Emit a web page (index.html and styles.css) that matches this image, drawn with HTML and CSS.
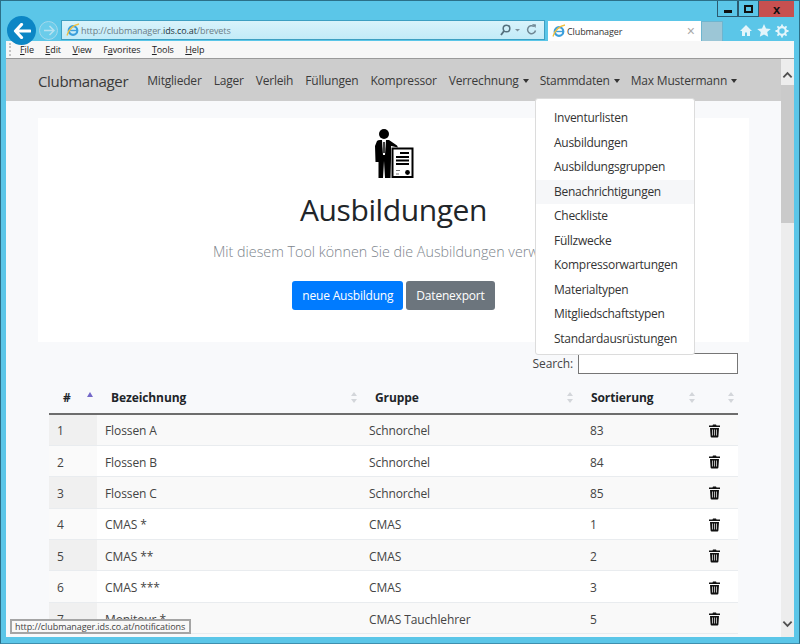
FILE: index.html
```html
<!DOCTYPE html>
<html>
  <head>
    <meta charset="utf-8">
    <title>Clubmanager</title>
    <link rel="stylesheet" href="styles.css">
  </head>
  <body>
    <div class="window">
      <div class="caption">
        <div class="caption-btn"><span class="min-glyph"></span></div>
        <div class="caption-btn"><span class="max-glyph"></span></div>
        <div class="caption-btn close-btn"><span class="close-glyph">x</span></div>
      </div>

      <div class="toolbar">
        <div class="back-btn">
          <svg width="18" height="16" viewBox="0 0 18 16"><path d="M8.500 1.500 2.500 8l6 6.500M3 8H17" fill="none" stroke="#fff" stroke-width="3.200" stroke-linecap="round" stroke-linejoin="round"/></svg>
        </div>
        <div class="fwd-btn">
          <svg width="12" height="11" viewBox="0 0 12 11"><path d="M6.500 1 11 5.500 6.500 10M11 5.500H1" fill="none" stroke="#b7e2f1" stroke-width="1.500"/></svg>
        </div>
        <div class="address">
          <svg class="ie-logo" width="14" height="14" viewBox="0 0 14 14"><circle cx="7" cy="7.500" r="4.300" fill="none" stroke="#3c9fdc" stroke-width="2.200"/><path d="M3 7.500h8" stroke="#3c9fdc" stroke-width="1.400"/><path d="M1 12.500C3 6 8 2 13 1" fill="none" stroke="#f0c040" stroke-width="1.300"/></svg>
          <span class="url">http://clubmanager.<b>ids.co.at</b>/brevets</span>
          <svg class="addr-icons" width="40" height="14" viewBox="0 0 40 14"><circle cx="6.500" cy="5.500" r="3.300" fill="none" stroke="#55707e" stroke-width="1.500"/><path d="M4 8 1 12" stroke="#55707e" stroke-width="1.800"/><path d="m15 6 2.500 2.500L20 6z" fill="#7d929d"/><path d="M34 3.500a4 4 0 1 0 1.500 4" fill="none" stroke="#6f8794" stroke-width="1.500"/><path d="m32 1 4 .500-.500 3.500z" fill="#6f8794"/></svg>
        </div>
        <div class="tab">
          <svg class="ie-logo" width="14" height="14" viewBox="0 0 14 14"><circle cx="7" cy="7.500" r="4.300" fill="none" stroke="#3c9fdc" stroke-width="2.200"/><path d="M3 7.500h8" stroke="#3c9fdc" stroke-width="1.400"/><path d="M1 12.500C3 6 8 2 13 1" fill="none" stroke="#f0c040" stroke-width="1.300"/></svg>
          <span class="tab-title">Clubmanager</span>
          <span class="tab-close">×</span>
        </div>
        <div class="new-tab"></div>
        <div class="tool-icons">
          <svg width="14" height="13" viewBox="0 0 14 13"><path d="M7 1 1 7h2v5h3V8.500h2V12h3V7h2z" fill="#e4f5fb"/></svg>
          <svg width="14" height="13" viewBox="0 0 14 13"><path d="m7 0 2 4.400 4.800.5-3.600 3.200 1 4.700L7 10.400 2.800 12.800l1-4.700L.2 4.900 5 4.400z" fill="#e4f5fb"/></svg>
          <svg width="14" height="14" viewBox="0 0 14 14"><circle cx="7" cy="7" r="3.800" fill="none" stroke="#e4f5fb" stroke-width="2.200"/><path d="M7 .5v2.500M7 11v2.500M.5 7H3M11 7h2.500M2.400 2.400l1.800 1.800M9.800 9.800l1.800 1.800M2.400 11.600l1.800-1.800M9.800 4.200l1.800-1.800" stroke="#e4f5fb" stroke-width="1.800"/></svg>
        </div>
      </div>

      <div class="viewport">
        <div class="menubar">
          <span class="grip"></span>
          <span class="menu-item"><u>F</u>ile</span>
          <span class="menu-item"><u>E</u>dit</span>
          <span class="menu-item"><u>V</u>iew</span>
          <span class="menu-item">F<u>a</u>vorites</span>
          <span class="menu-item"><u>T</u>ools</span>
          <span class="menu-item"><u>H</u>elp</span>
        </div>

        <div class="page-row">
          <div class="page">
            <nav class="navbar">
              <a class="brand">Clubmanager</a>
              <a class="nav-link">Mitglieder</a>
              <a class="nav-link">Lager</a>
              <a class="nav-link">Verleih</a>
              <a class="nav-link">Füllungen</a>
              <a class="nav-link">Kompressor</a>
              <a class="nav-link caret">Verrechnung</a>
              <a class="nav-link caret">Stammdaten</a>
              <a class="nav-link caret">Max Mustermann</a>
            </nav>

            <div class="dropdown">
              <a class="dropdown-item">Inventurlisten</a>
              <a class="dropdown-item">Ausbildungen</a>
              <a class="dropdown-item">Ausbildungsgruppen</a>
              <a class="dropdown-item hover">Benachrichtigungen</a>
              <a class="dropdown-item">Checkliste</a>
              <a class="dropdown-item">Füllzwecke</a>
              <a class="dropdown-item">Kompressorwartungen</a>
              <a class="dropdown-item">Materialtypen</a>
              <a class="dropdown-item">Mitgliedschaftstypen</a>
              <a class="dropdown-item">Standardausrüstungen</a>
            </div>

            <section class="jumbotron">
              <svg class="hero-icon" width="40" height="50" viewBox="0 0 40 50">
                <circle cx="10" cy="5" r="5" fill="#000"/>
                <path d="M3 12q1-1 3-1h9l8 5.500 1 2-7-1.500v13l-.500 19H11l-1-17-1 17H4.500V33h-3L1 17z" fill="#000"/>
                <path d="M8 11h4l-1 15H9z" fill="#fff"/>
                <path d="M10 13v11" stroke="#000" stroke-width="1.500"/>
                <rect x="18.500" y="19.500" width="20" height="28.500" fill="#fff" stroke="#000" stroke-width="2"/>
                <path d="M26 24h9M22 28h13M22 31.500h13M22 35h13" stroke="#000" stroke-width="1.800"/>
                <circle cx="33.500" cy="43.500" r="2.400" fill="#000"/>
                <path d="M22 41.500h4M22 45h3" stroke="#777" stroke-width="1"/>
              </svg>
              <h1 class="hero-title">Ausbildungen</h1>
              <p class="lead">Mit diesem Tool können Sie die Ausbildungen verwalten.</p>
              <div class="hero-buttons">
                <a class="btn btn-primary">neue Ausbildung</a>
                <a class="btn btn-secondary">Datenexport</a>
              </div>
            </section>

            <div class="table-wrap">
              <div class="search">
                <label>Search:</label>
                <input type="text">
              </div>
              <table class="data">
                <colgroup>
                  <col class="c-num"><col class="c-name"><col class="c-group"><col class="c-sort"><col class="c-del">
                </colgroup>
                <thead>
                  <tr>
                    <th class="num-head">#<span class="sort-up"></span></th>
                    <th>Bezeichnung<span class="sort-both"></span></th>
                    <th class="group-head">Gruppe<span class="sort-both"></span></th>
                    <th class="sort-head">Sortierung<span class="sort-both"></span></th>
                    <th><span class="sort-both"></span></th>
                  </tr>
                </thead>
                <tbody id="rows"></tbody>
              </table>
            </div>

            <div class="status-tip">http://clubmanager.ids.co.at/notifications</div>
          </div>

          <div class="scrollbar">
            <svg width="11" height="8" viewBox="0 0 12 8"><path d="M1.500 6.500 6 2l4.500 4.500" fill="none" stroke="#505050" stroke-width="2"/></svg>
            <div class="thumb"></div>
            <svg class="arrow-down" width="11" height="8" viewBox="0 0 12 8"><path d="M1.500 1.500 6 6l4.500-4.500" fill="none" stroke="#505050" stroke-width="2"/></svg>
          </div>
        </div>
      </div>
    </div>

    <script>
      var rows = [
        ["1", "Flossen A", "Schnorchel", "83"],
        ["2", "Flossen B", "Schnorchel", "84"],
        ["3", "Flossen C", "Schnorchel", "85"],
        ["4", "CMAS *", "CMAS", "1"],
        ["5", "CMAS **", "CMAS", "2"],
        ["6", "CMAS ***", "CMAS", "3"],
        ["7", "Monitour *", "CMAS Tauchlehrer", "5"],
      ];
      var trash = '<svg width="11" height="14" viewBox="0 0 11 13"><path d="M4 0h3l.5 1H11v1.500H0V1h3.500zM1 3.500h9l-.6 8.500q-.1 1-1 1H2.600q-.9 0-1-1z" fill="#111"/><path d="M3.500 5v6M5.500 5v6M7.500 5v6" stroke="#fff" stroke-width=".7"/></svg>';
      var body = document.querySelector("#rows");
      rows.forEach(function (r) {
        var tr = document.createElement("tr");
        tr.innerHTML =
          '<td class="num">' + r[0] + "</td><td>" + r[1] + "</td><td>" + r[2] + "</td><td>" + r[3] + '</td><td class="del">' + trash + "</td>";
        body.appendChild(tr);
      });
    </script>
  </body>
</html>
```

FILE: styles.css
```css
* {
  box-sizing: border-box;
}
html,
body {
  margin: 0;
  height: 100%;
  overflow: hidden;
}
body {
  font-family: "Open Sans", "Liberation Sans", sans-serif;
  color: #212529;
}
.window {
  width: 800px;
  height: 644px;
  display: flex;
  flex-direction: column;
  background-color: #5bc6e8;
  border: 1px solid #2b6f88;
  border-bottom-color: #3f8fae;
  padding: 0 5px 6px 5px;
}
.caption {
  display: flex;
  justify-content: flex-end;
  height: 16px;
}
.caption-btn {
  width: 21px;
  height: 16px;
  display: flex;
  align-items: center;
  justify-content: center;
  border: 1px solid #2b5a70;
  border-top: 0;
}
.close-btn {
  width: 35px;
  background-color: #c75050;
  border: 0;
}
.min-glyph {
  width: 8px;
  height: 3px;
  margin-top: 6px;
  background-color: #111;
}
.max-glyph {
  width: 9px;
  height: 8px;
  border: 2px solid #111;
}
.close-glyph {
  color: #111;
  font: bold 13px/13px "Liberation Sans", sans-serif;
}
.toolbar {
  display: flex;
  align-items: flex-end;
  height: 24px;
  position: relative;
}
.back-btn {
  width: 29px;
  height: 29px;
  border-radius: 50%;
  background-color: #0c86c5;
  display: flex;
  align-items: center;
  justify-content: center;
  margin: 0 0 -4px 1px;
  position: relative;
  z-index: 1;
  flex: none;
}
.fwd-btn {
  width: 19px;
  height: 19px;
  border-radius: 50%;
  border: 1.500px solid #a3d9ec;
  background-color: #6accea;
  display: flex;
  align-items: center;
  justify-content: center;
  margin: 0 0 1px 3px;
  flex: none;
}
.address {
  width: 484px;
  height: 20px;
  margin: 0 0 1px 3px;
  padding: 0 4px;
  background: linear-gradient(#d9f3fb, #c2ebf8);
  border: 1px solid #3d9fc2;
  display: flex;
  align-items: center;
  gap: 1px;
  flex: none;
}
.url {
  flex: 1;
  font-size: 9px;
  letter-spacing: -0.1px;
  color: #6b7d86;
}
.url b {
  font-weight: 400;
  color: #24343c;
}
.tab {
  width: 153px;
  height: 20px;
  margin-left: 3px;
  padding: 0 6px 0 4px;
  background-color: #fff;
  display: flex;
  align-items: center;
  gap: 1px;
  flex: none;
}
.tab-title {
  flex: 1;
  font-size: 9px;
  letter-spacing: -0.1px;
  color: #333;
}
.tab-close {
  font: 14px/14px "Liberation Sans", sans-serif;
  color: #aaa;
}
.new-tab {
  width: 22px;
  height: 20px;
  background-color: #9cc6d6;
  border: 1px solid #6db5cf;
  border-bottom: 0;
  flex: none;
}
.tool-icons {
  display: flex;
  gap: 4px;
  align-items: center;
  height: 21px;
  margin-left: 16px;
}
.viewport {
  flex: 1;
  min-height: 0;
  display: flex;
  flex-direction: column;
  background-color: #fff;
}
.menubar {
  height: 18px;
  flex: none;
  display: flex;
  align-items: center;
  background-color: #f7f7f7;
  border-bottom: 1px solid #9a9a9a;
  font-size: 9px;
  letter-spacing: -0.1px;
  color: #222;
  padding-left: 3px;
}
.grip {
  width: 2px;
  height: 13px;
  margin-right: 9px;
  border-left: 2px dotted #c4c4c4;
}
.menu-item {
  margin-right: 11.500px;
}
.page-row {
  flex: 1;
  min-height: 0;
  display: flex;
}
.page {
  flex: 1;
  min-width: 0;
  position: relative;
  overflow: hidden;
  background-color: #f8f9fb;
}
.navbar {
  height: 42px;
  display: flex;
  align-items: center;
  padding: 1px 0 0 32px;
  background-color: #cdcdcd;
  color: #3a3a3a;
  white-space: nowrap;
}
.brand {
  font-size: 15px;
  letter-spacing: -0.35px;
  margin-right: 19px;
}
.nav-link {
  font-size: 12px;
  letter-spacing: -0.2px;
  margin-right: 12px;
}
.caret {
  margin-right: 11px;
}
.caret::after {
  content: "";
  display: inline-block;
  margin-left: 4px;
  vertical-align: 2px;
  border-top: 4px solid #333;
  border-left: 3.500px solid transparent;
  border-right: 3.500px solid transparent;
}
.dropdown {
  position: absolute;
  left: 529px;
  top: 39px;
  z-index: 5;
  width: 160px;
  height: 257px;
  padding: 7px 0;
  background-color: #fff;
  border: 1px solid #dcdcdc;
  border-radius: 3px;
}
.dropdown-item {
  display: block;
  height: 24.500px;
  line-height: 24px;
  padding-left: 18px;
  font-size: 12px;
  letter-spacing: -0.27px;
  color: #333;
}
.dropdown-item.hover {
  background-color: #f6f7f9;
}
.jumbotron {
  margin: 17px 32px 0;
  height: 224px;
  padding-top: 11px;
  background-color: #fff;
  display: flex;
  flex-direction: column;
  align-items: center;
}
.hero-icon {
  display: block;
}
.hero-title {
  margin: 10px 0 0;
  font-size: 30px;
  letter-spacing: -0.4px;
  line-height: 42px;
  font-weight: 400;
}
.lead {
  margin: 11px 0 0;
  font-size: 14.300px;
  line-height: 20px;
  font-weight: 300;
  color: #7d858c;
  white-space: nowrap;
}
.hero-buttons {
  display: flex;
  gap: 3px;
  margin-top: 19px;
}
.btn {
  height: 29px;
  line-height: 29px;
  padding: 0 10px;
  border-radius: 3px;
  color: #fff;
  font-size: 12px;
  letter-spacing: -0.2px;
}
.btn-primary {
  background-color: #007bff;
}
.btn-secondary {
  background-color: #6c757d;
}
.table-wrap {
  margin: 10px 43px 0;
}
.search {
  display: flex;
  justify-content: flex-end;
  align-items: center;
  gap: 5px;
  height: 22px;
  font-size: 12px;
  letter-spacing: -0.1px;
  color: #444;
}
.search input {
  width: 160px;
  height: 21px;
  border: 1px solid #767676;
  background-color: #fff;
  padding: 0;
}
.data {
  width: 689px;
  margin-top: 8px;
  border-collapse: collapse;
  table-layout: fixed;
  font-size: 12px;
  letter-spacing: -0.1px;
  color: #444;
}
.c-num {
  width: 48px;
}
.c-name {
  width: 264px;
}
.c-group {
  width: 221px;
}
.c-sort {
  width: 116px;
}
.c-del {
  width: 40px;
}
.data th {
  position: relative;
  height: 32px;
  padding: 0 0 0 14px;
  text-align: left;
  font-weight: 700;
  color: #212529;
  border-bottom: 2px solid #6d6d6d;
}
.data th.sort-head {
  padding-left: 9px;
}
.sort-up {
  position: absolute;
  top: 10px;
  right: 4px;
  border-bottom: 5px solid #7468c8;
  border-left: 3px solid transparent;
  border-right: 3px solid transparent;
}
.sort-both {
  position: absolute;
  top: 10px;
  right: 4px;
  width: 6px;
  height: 11px;
}
.group-head .sort-both {
  right: 9px;
}
.sort-head .sort-both {
  right: 3px;
}
.sort-both::before,
.sort-both::after {
  content: "";
  position: absolute;
  left: 0;
  border-left: 3px solid transparent;
  border-right: 3px solid transparent;
}
.sort-both::before {
  top: 0;
  border-bottom: 4px solid #d3d6da;
}
.sort-both::after {
  bottom: 0;
  border-top: 4px solid #d3d6da;
}
.data td {
  height: 31.400px;
  padding: 2px 0 0 8px;
  border-bottom: 1px solid #e9ecef;
  background-color: #fff;
}
.data tbody tr:nth-child(odd) td {
  background-color: #f9f9f9;
}
.data td.num {
  background-color: #fafafa;
}
.data tbody tr:nth-child(odd) td.num {
  background-color: #f0f0f0;
}
.data td.del {
  padding: 0;
  text-align: center;
}
.del svg {
  display: block;
  margin: 2px auto 0;
  transform: translateX(-4px);
}
.status-tip {
  position: absolute;
  left: 4px;
  bottom: 3px;
  z-index: 6;
  height: 15px;
  width: 181px;
  line-height: 11px;
  padding-left: 3px;
  font-size: 9px;
  letter-spacing: -0.08px;
  color: #444;
  background-color: #f8f8f8;
  border: 2px solid #a5a5a5;
  white-space: nowrap;
}
.scrollbar {
  width: 13px;
  flex: none;
  background-color: #ededed;
  display: flex;
  flex-direction: column;
  align-items: center;
  padding: 12px 0 9px;
}
.thumb {
  width: 13px;
  height: 138px;
  margin-top: 6px;
  background-color: #cacaca;
}
.arrow-down {
  margin-top: auto;
}
```
